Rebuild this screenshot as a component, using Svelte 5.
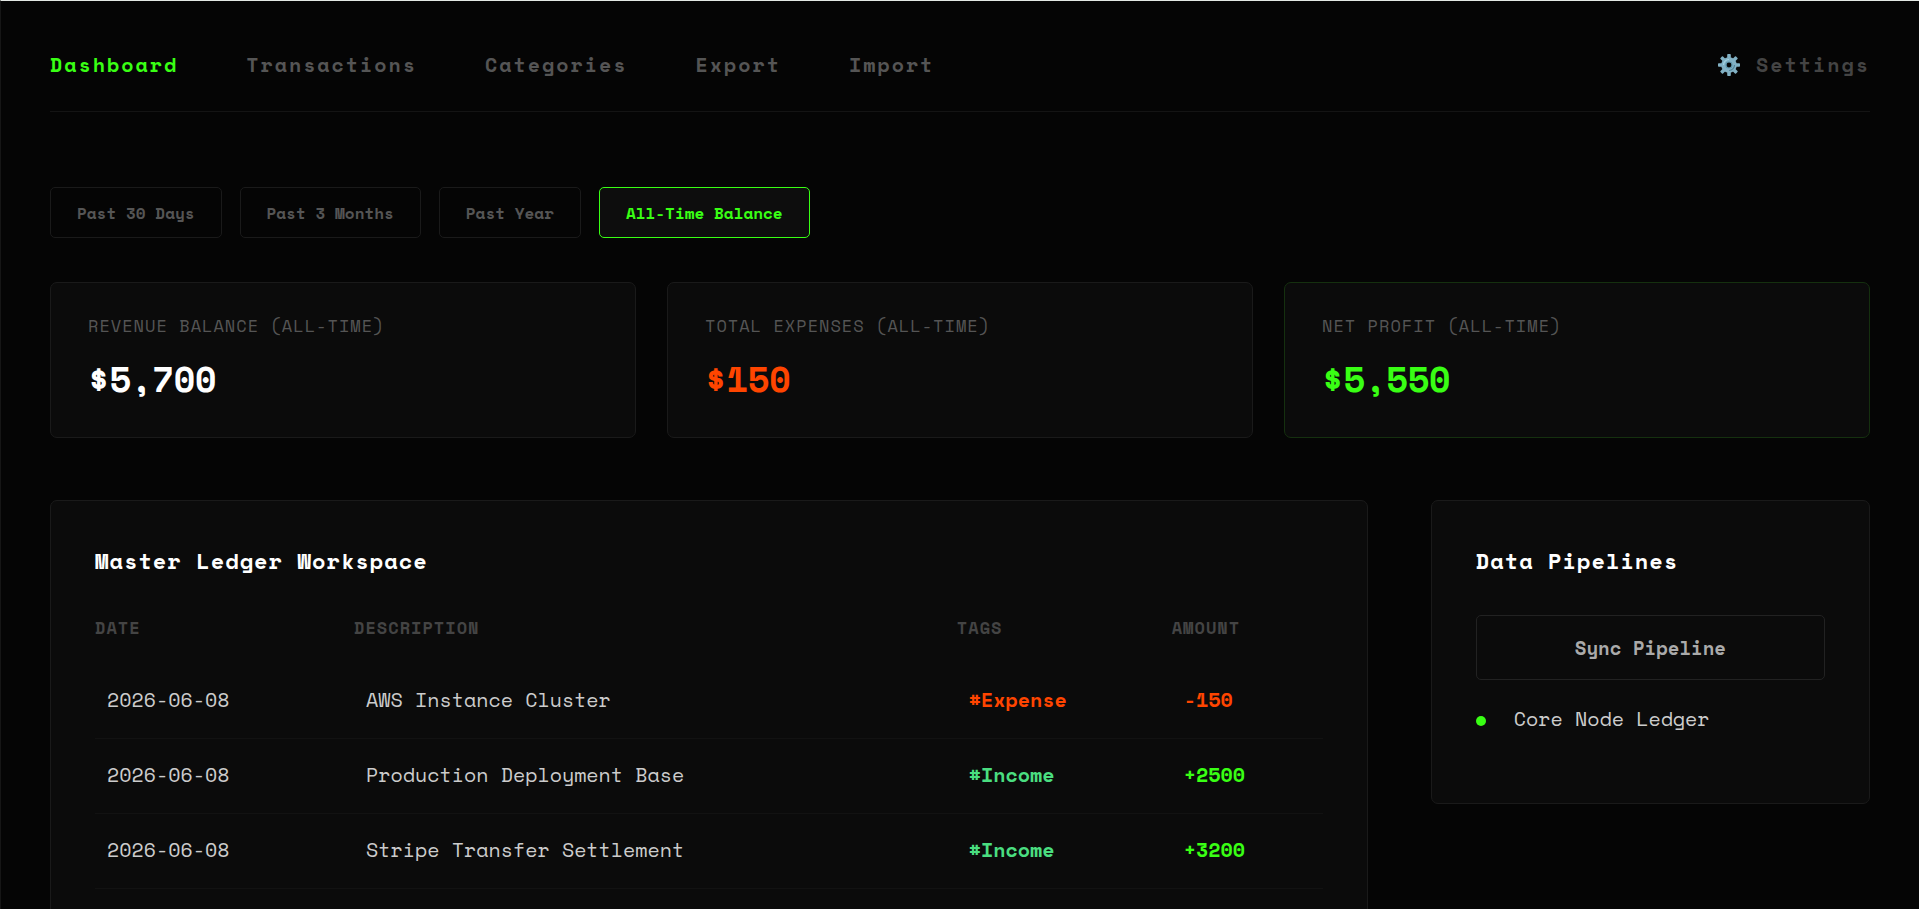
<script lang="ts">
type Entry = {
    date: string;
    description: string;
    tag: string;
    amount: number;
};

const pages: string[] = ["Dashboard", "Transactions", "Categories", "Export", "Import"];
const ranges: string[] = ["Past 30 Days", "Past 3 Months", "Past Year", "All-Time Balance"];

const entries: Entry[] = [
    { date: "2026-06-08", description: "AWS Instance Cluster", tag: "Expense", amount: -150 },
    { date: "2026-06-08", description: "Production Deployment Base", tag: "Income", amount: 2500 },
    { date: "2026-06-08", description: "Stripe Transfer Settlement", tag: "Income", amount: 3200 }
];

let page = $state("Dashboard");
let range = $state("All-Time Balance");

const revenue = entries.filter((e) => e.amount > 0).reduce((sum, e) => sum + e.amount, 0);
const expenses = entries.filter((e) => e.amount < 0).reduce((sum, e) => sum - e.amount, 0);

function money(value: number): string {
    return "$" + value.toLocaleString("en-US");
}

function signed(value: number): string {
    return value > 0 ? `+${value}` : `${value}`;
}
</script>

<svelte:head>
    <title>Dashboard</title>
</svelte:head>

<div class="app">
    <header>
        <nav>
            {#each pages as name}
                <a href="#{name.toLowerCase()}" class:active={page === name} onclick={() => (page = name)}>{name}</a>
            {/each}
        </nav>
        <a href="#settings" class="settings">
            <svg viewBox="0 0 24 24" width="24" height="24" aria-hidden="true">
                <g fill="#82b1c4">
                    {#each [0, 45, 90, 135] as angle}
                        <rect x="10.2" y="1" width="3.6" height="22" rx="0.8" transform="rotate({angle} 12 12)" />
                    {/each}
                    <circle cx="12" cy="12" r="7.8" />
                </g>
                <path d="M6.5 12a5.5 5.5 0 0 1 5.5-5.5" fill="none" stroke="#a5d3e2" stroke-width="1.2" />
                <path d="M17.5 12a5.5 5.5 0 0 1-5.5 5.5" fill="none" stroke="#4f8298" stroke-width="1.2" />
                <circle cx="12" cy="12" r="3" fill="#050505" stroke="#5f94a9" stroke-width="1.2" />
            </svg>
            <span>Settings</span>
        </a>
    </header>

    <main>
        <div class="ranges">
            {#each ranges as name}
                <button type="button" class:active={range === name} onclick={() => (range = name)}>{name}</button>
            {/each}
        </div>

        <div class="cards">
            <div class="card">
                <h3>REVENUE BALANCE (ALL-TIME)</h3>
                <p>{money(revenue)}</p>
            </div>
            <div class="card">
                <h3>TOTAL EXPENSES (ALL-TIME)</h3>
                <p class="negative">{money(expenses)}</p>
            </div>
            <div class="card profit">
                <h3>NET PROFIT (ALL-TIME)</h3>
                <p class="positive">{money(revenue - expenses)}</p>
            </div>
        </div>

        <div class="workspace">
            <section class="panel">
                <h2>Master Ledger Workspace</h2>
                <table>
                    <thead>
                        <tr>
                            <th class="date">DATE</th>
                            <th class="description">DESCRIPTION</th>
                            <th class="tags">TAGS</th>
                            <th>AMOUNT</th>
                        </tr>
                    </thead>
                    <tbody>
                        {#each entries as entry}
                            <tr>
                                <td>{entry.date}</td>
                                <td>{entry.description}</td>
                                <td class="tag" class:negative={entry.tag === "Expense"}>#{entry.tag}</td>
                                <td class="amount {entry.amount > 0 ? 'positive' : 'negative'}">{signed(entry.amount)}</td>
                            </tr>
                        {/each}
                    </tbody>
                </table>
            </section>

            <section class="panel">
                <h2>Data Pipelines</h2>
                <button type="button" class="sync">Sync Pipeline</button>
                <div class="status">
                    <span class="dot"></span>
                    <span>Core Node Ledger</span>
                </div>
            </section>
        </div>
    </main>
</div>

<style>
    :global(body) {
        background-color: #050505;
    }

    .app {
        box-sizing: border-box;
        min-height: 100vh;
        padding: 0 49px 50px;
        border-top: 1px solid #e3e8e4;
        border-left: 1px solid #161616;
        background-color: #050505;
        color: #ccc;
        font-family: "Space Mono", "Liberation Mono", monospace;
        font-size: 20px;
        line-height: 24px;
    }

    header {
        display: flex;
        justify-content: space-between;
        padding: 52px 0 34px;
        border-bottom: 1px solid #141414;
        font-weight: bold;
        letter-spacing: 2px;
    }

    nav {
        display: flex;
        gap: 68px;
    }

    header a {
        color: #555;
        text-decoration: none;
    }

    header a.active {
        color: #39ff14;
    }

    header .settings {
        display: flex;
        gap: 15px;
        color: #444;
    }

    button {
        font-family: inherit;
        font-weight: bold;
        cursor: pointer;
    }

    .ranges {
        display: flex;
        flex-wrap: wrap;
        gap: 18px;
        margin-top: 75px;
    }

    .ranges button {
        padding: 15px 26px 13px;
        border: 1px solid #1a1a1a;
        border-radius: 5px;
        background-color: transparent;
        color: #555;
        font-size: 16px;
        line-height: 21px;
    }

    .ranges button.active {
        border-color: #39ff14;
        background-color: #0d0d0d;
        color: #39ff14;
    }

    .cards {
        display: grid;
        grid-template-columns: repeat(3, 1fr);
        gap: 31px;
        margin-top: 44px;
    }

    .card {
        padding: 33px 37px 38px;
        border: 1px solid #1a1a1a;
        border-radius: 7px;
        background-color: #0b0b0b;
    }

    .card h3 {
        margin: 0;
        color: #555;
        font-size: 17px;
        font-weight: normal;
        line-height: 20px;
        letter-spacing: 1px;
    }

    .card p {
        margin: 23px 0 0;
        color: #fff;
        font-size: 35px;
        font-weight: bold;
        line-height: 40px;
    }

    .profit {
        border-color: #15300f;
    }

    .workspace {
        display: grid;
        grid-template-columns: 3fr 1fr;
        align-items: start;
        gap: 63px;
        margin-top: 62px;
    }

    .panel {
        padding: 44px;
        border: 1px solid #1a1a1a;
        border-radius: 7px;
        background-color: #0b0b0b;
    }

    .panel h2 {
        margin: 0 0 38px;
        color: #fff;
        font-size: 22px;
        line-height: 32px;
        letter-spacing: 1px;
    }

    table {
        width: 100%;
        table-layout: fixed;
        border-collapse: separate;
        border-spacing: 0;
    }

    th {
        padding: 3px 0 26px;
        color: #444;
        font-size: 17px;
        line-height: 20px;
        letter-spacing: 1px;
        text-align: left;
    }

    .date {
        width: 21.1%;
    }

    .description {
        width: 49.1%;
    }

    .tags {
        width: 17.5%;
    }

    td {
        padding: 24px 12px 26px;
        border-bottom: 1px solid #121212;
    }

    .tag {
        color: #4ade80;
        font-weight: bold;
    }

    .amount {
        font-weight: bold;
    }

    .card .positive,
    td.positive {
        color: #39ff14;
    }

    .card .negative,
    td.negative {
        color: #ff4500;
    }

    .sync {
        width: 100%;
        padding: 20px 24px 18px;
        border: 1px solid #222;
        border-radius: 5px;
        background-color: transparent;
        color: #aaa;
        font-size: 19px;
        line-height: 25px;
    }

    .status {
        display: flex;
        align-items: baseline;
        gap: 28px;
        margin: 27px 0 28px;
    }

    .dot {
        width: 10px;
        height: 10px;
        border-radius: 50%;
        background-color: #39ff14;
    }
</style>
